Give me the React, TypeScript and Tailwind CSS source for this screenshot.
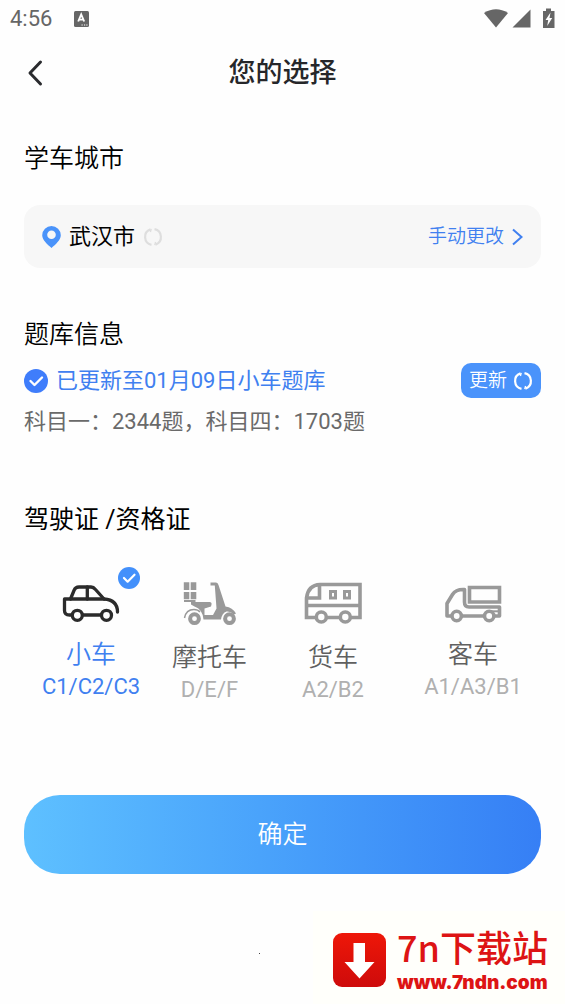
import React, { useState } from 'react'

const CarIcon = () => (
  <svg width="58" height="44" viewBox="0 0 58 44" fill="none" stroke="currentColor" strokeWidth="3.300" strokeLinejoin="round" strokeLinecap="round">
    <path d="M9.500 34H7.500Q2.500 34 2.500 29.500V18H42Q55.500 19 55.500 31" />
    <path d="M8.500 18L12 9.500Q13.300 6 17 6H29Q31.500 6 33.500 8.500L42 18" />
    <path d="M25.300 6V18M21 34H39" />
    <circle cx="15.300" cy="34.300" r="5" />
    <circle cx="44.500" cy="34.300" r="5" />
  </svg>
)

const ScooterIcon = () => (
  <svg width="56" height="47" viewBox="0 0 56 47" fill="currentColor">
    <path d="M1.800 1.200H7.300V9H1.800zM8.700 1.200H14.300V9H8.700zM1.800 11H7.300V18.300H1.800zM8.700 11H14.300V18.300H8.700z" />
    <path d="M2 18.900H13.500V21H27.500Q30 21 29.500 23.500L29 25.500L22.500 27.500V34H31L34.500 27.500L32.800 4.500H28.500V1.500H34Q36 1.500 36.500 4L43.500 25.500Q50.500 26.500 54 32.500L52 33.500Q48.500 30 44.500 30.500Q40 32 39 38.500H21.500Q20.500 28 12.500 25.500L9 23.500V21H2z" />
    <path d="M2.500 37Q4 28.500 12 28.500Q16 28.500 18 31" fill="none" stroke="currentColor" strokeWidth="1.500" />
    <circle cx="12.500" cy="37.700" r="4.400" fill="none" stroke="currentColor" strokeWidth="4" />
    <circle cx="47.500" cy="37.700" r="4.400" fill="none" stroke="currentColor" strokeWidth="4" />
  </svg>
)

const BusIcon = () => (
  <svg width="60" height="47" viewBox="0 0 60 47" fill="none" stroke="currentColor" strokeWidth="3.600">
    <path d="M13 36.500H3.500V17Q5 4 17 3.500H57V36.500H48M24 36.500H37" />
    <path d="M3.500 17H16.500V4M3.500 24.500H57" />
    <path d="M27.500 10.500h5v6.500h-5zM41.500 10.500h5v6.500h-5z" strokeWidth="3" />
    <circle cx="18.300" cy="36" r="5" />
    <circle cx="42.300" cy="36" r="5" />
  </svg>
)

const TruckIcon = () => (
  <svg width="58" height="44" viewBox="0 0 58 44" fill="none" stroke="currentColor" strokeWidth="3.600">
    <path d="M25.500 6.500H55.500V21H25.500z" />
    <path d="M7.500 35H3V22.500L8.500 13.500Q12 8 20.500 8.500V21Q20.500 26 25 26H55.500V35H50.500M18 35H40" strokeLinejoin="round" />
    <path d="M45 30.300H54" strokeWidth="2" />
    <circle cx="12.700" cy="35" r="4.700" />
    <circle cx="45.200" cy="35" r="4.700" />
  </svg>
)

const CheckBadge = ({ className }: { className: string }) => (
  <svg className={className} viewBox="0 0 24 24" fill="none">
    <circle cx="12" cy="12" r="12" fill="currentColor" />
    <path d="M6.500 12L10.500 16L18 8.500" stroke="#fff" strokeWidth="2.400" strokeLinecap="round" strokeLinejoin="round" />
  </svg>
)

const RefreshIcon = ({ className }: { className: string }) => (
  <svg className={className} viewBox="0 0 20 20" fill="none" stroke="currentColor" strokeWidth="2.200">
    <path d="M11.500 2.200A8 8 0 0 1 12.500 17.600M8.500 17.800A8 8 0 0 1 7.500 2.400" />
    <path d="M12.600 15L11.800 18.200M7.400 5L8.200 1.800" strokeWidth="1.400" />
  </svg>
)

const licences = [
  { id: 'car', name: '小车', code: 'C1/C2/C3', icon: <CarIcon /> },
  { id: 'motor', name: '摩托车', code: 'D/E/F', icon: <ScooterIcon /> },
  { id: 'truck', name: '货车', code: 'A2/B2', icon: <BusIcon /> },
  { id: 'bus', name: '客车', code: 'A1/A3/B1', icon: <TruckIcon /> }
]

const StatusBar = () => (
  <div className="flex h-[38px] items-center justify-between px-[10px] text-[#666666]">
    <div className="flex items-center gap-[22px]">
      <span className="text-[22px] leading-[32px]">4:56</span>
      <svg width="15" height="17" viewBox="0 0 15 17">
        <rect width="15" height="16" rx="1.500" fill="currentColor" />
        <path d="M4.200 10.500L7.200 3.500L10.200 10.500M5.200 8.600H9.300" stroke="#fff" strokeWidth="1.900" fill="none" />
        <path d="M7.500 14h1.200M10 14h1.200M12.300 14h1.200" stroke="#fff" strokeWidth="1.200" />
      </svg>
    </div>
    <svg width="71" height="22" viewBox="0 0 71 22" fill="currentColor">
      <path d="M0 5Q12 -2.500 24 5L12 19.500z" />
      <path d="M46.500 1.500V19.500H28.500z" />
      <path d="M59 3H62V0.500H67V3H70.500V20H59z" />
      <path d="M66.500 4.500L61.500 12H64.200L63.200 18L68.200 10H65.500z" fill="#fff" />
    </svg>
  </div>
)

const Watermark = () => (
  <div className="absolute right-0 bottom-0 flex h-[93px] w-[252px] items-center gap-[11px] bg-[#fffffb] pt-1 pl-[20px] text-[#dd1414]">
    <svg width="53" height="54" viewBox="0 0 53 54" className="shrink-0">
      <defs>
        <linearGradient id="dl" x1="0" y1="0" x2="0" y2="1">
          <stop offset="0" stopColor="#ee1708" />
          <stop offset="1" stopColor="#ce0b0b" />
        </linearGradient>
      </defs>
      <rect width="53" height="54" rx="9" fill="url(#dl)" />
      <path d="M20.500 10H32V29H41.500L26.500 45.500L11.500 29H20.500z" fill="#fff" />
    </svg>
    <div className="flex flex-col pb-1 whitespace-nowrap">
      <span className="font-['Noto_Sans_CJK_SC',sans-serif] text-[36px] leading-[50px] font-medium">7n下载站</span>
      <span className="font-['Inter',sans-serif] text-[19px] leading-[24px] font-black">www.7ndn.com</span>
    </div>
  </div>
)

const App = () => {
  const [selected, setSelected] = useState('car')

  return (
    <div className="relative min-h-screen bg-[#fefefe] font-['Roboto','Noto_Sans_CJK_SC',sans-serif] text-black">
      <StatusBar />

      <header className="grid h-[70px] grid-cols-[1fr_auto_1fr] items-center px-6">
        <button type="button" aria-label="返回" className="w-6">
          <svg width="20" height="28" viewBox="0 0 20 28" fill="none" stroke="#2a2b2e" strokeWidth="3" strokeLinecap="round" strokeLinejoin="round">
            <path d="M16.500 3L6 14L16.500 25" />
          </svg>
        </button>
        <h1 className="text-[27px] leading-[36px] font-medium text-[#26272a]">您的选择</h1>
      </header>

      <main className="px-6">
        {/* City */}
        <section className="pt-[33px]">
          <h2 className="text-[25px] leading-[36px] font-[350]">学车城市</h2>
          <div className="mt-7 flex h-[63px] items-center justify-between rounded-[16px] bg-[#f7f7f7] px-[18px]">
            <div className="flex items-center">
              <svg width="19" height="22" viewBox="0 0 19 22">
                <path fillRule="evenodd" d="M9.500 0A9.300 9.300 0 0 1 18.800 9.300C18.800 14 13.500 18.500 9.500 22C5.500 18.500 .2 14 .2 9.300A9.300 9.300 0 0 1 9.500 0zM9.500 4.500A4.300 4.300 0 1 0 9.500 13.100A4.300 4.300 0 1 0 9.500 4.500z" fill="#4a93fa" />
              </svg>
              <span className="ml-2 text-[22px] leading-[32px]">武汉市</span>
              <RefreshIcon className="ml-2 size-5 text-[#dedede]" />
            </div>
            <button type="button" className="flex items-center gap-2 text-[19px] leading-[32px] font-[350] text-[#4080f0]">
              手动更改
              <svg width="11" height="18" viewBox="0 0 11 18" fill="none" stroke="currentColor" strokeWidth="2">
                <path d="M1 1.500L9.500 9L1 16.500" />
              </svg>
            </button>
          </div>
        </section>

        {/* Question bank */}
        <section className="pt-[49px]">
          <h2 className="text-[25px] leading-[36px] font-[350]">题库信息</h2>
          <div className="mt-[10px] flex items-center justify-between">
            <div className="flex items-center gap-2 text-[#4080f0]">
              <CheckBadge className="size-6 text-[#3f7dfb]" />
              <span className="text-[22px] leading-[32px]">已更新至01月09日小车题库</span>
            </div>
            <button type="button" className="flex h-[35px] items-center gap-[6px] rounded-[10px] bg-[#4a93fb] px-2 text-[19px] leading-[32px] font-[350] text-white">
              更新
              <RefreshIcon className="size-5" />
            </button>
          </div>
          <p className="mt-2 text-[22px] leading-[32px] text-[#6a6a6a]">科目一：2344题，科目四：1703题</p>
        </section>

        {/* Licence type */}
        <fieldset className="pt-16">
          <legend className="contents">
            <span className="block text-[25px] leading-[36px]">驾驶证 /资格证</span>
          </legend>
          <div className="mt-[43px] grid grid-cols-[134fr_103fr_144fr_136fr]">
            {licences.map((item) => {
              const active = item.id === selected
              return (
                <label key={item.id} className="flex cursor-pointer flex-col items-center">
                  <input
                    type="radio"
                    name="licence"
                    value={item.id}
                    checked={active}
                    onChange={() => setSelected(item.id)}
                    className="sr-only"
                  />
                  <span className={active ? 'relative text-[#2b2b2b]' : 'relative text-[#999999]'}>
                    {item.icon}
                    {active && <CheckBadge className="absolute -top-[14px] -right-5 size-[22px] text-[#4390fb]" />}
                  </span>
                  <span className={active ? 'mt-[14px] text-[25px] leading-[32px] font-[350] text-[#4080f0]' : 'mt-[14px] text-[25px] leading-[32px] font-[350] text-[#606060]'}>
                    {item.name}
                  </span>
                  <span className={active ? 'text-[22px] leading-[32px] text-[#4080f0]' : 'text-[22px] leading-[32px] text-[#b0b0b0]'}>
                    {item.code}
                  </span>
                </label>
              )
            })}
          </div>
        </fieldset>

        <button type="button" className="mt-[89px] h-[79px] w-full rounded-[36px] bg-linear-to-r from-[#5ec0ff] to-[#367ff5] text-[25px] leading-[36px] font-[350] text-white">
          确定
        </button>
        <div className="mx-auto mt-[79px] w-12">
          <div className="size-px bg-[#444444]" />
        </div>
      </main>

      <Watermark />
    </div>
  )
}

export default App
